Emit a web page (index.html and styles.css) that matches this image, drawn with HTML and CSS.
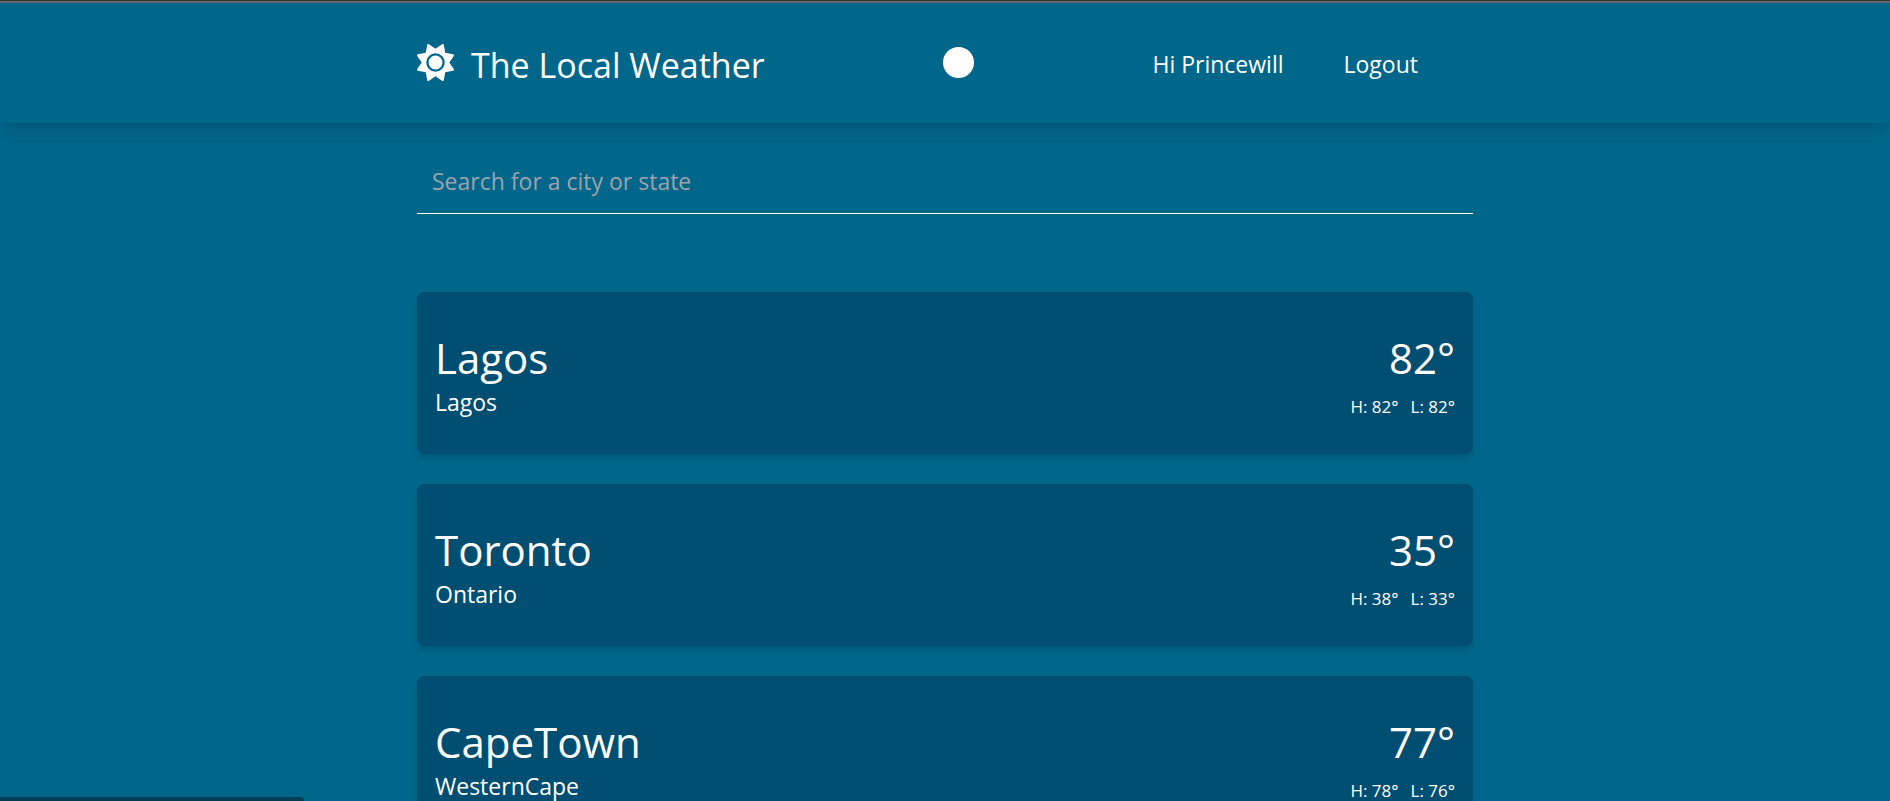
FILE: index.html
```html
<!DOCTYPE html>
<html lang="en">
<head>
<meta charset="utf-8">
<meta name="viewport" content="width=device-width, initial-scale=1">
<title>The Local Weather</title>
<link rel="stylesheet" href="styles.css">
</head>
<body>
<header class="site-header">
  <nav class="nav container">
    <a class="brand" href="#">
      <svg class="brand-icon" viewBox="0 0 512 512" aria-hidden="true"><path fill="currentColor" d="M361.500 1.200c5 2.100 8.600 6.600 9.600 11.900L391 121l107.900 19.800c5.300 1 9.800 4.600 11.900 9.600s1.500 10.700-1.600 15.200L446.900 256l62.300 90.300c3.100 4.500 3.700 10.200 1.600 15.200s-6.600 8.600-11.900 9.600L391 391 371.100 498.900c-1 5.300-4.600 9.800-9.600 11.900s-10.700 1.500-15.200-1.600L256 446.900l-90.300 62.300c-4.500 3.100-10.200 3.700-15.200 1.600s-8.600-6.600-9.600-11.900L121 391 13.100 371.100c-5.300-1-9.800-4.600-11.900-9.600s-1.500-10.700 1.600-15.200L65.100 256 2.800 165.700c-3.100-4.500-3.700-10.200-1.600-15.200s6.600-8.600 11.900-9.600L121 121 140.900 13.100c1-5.300 4.600-9.800 9.600-11.900s10.700-1.500 15.200 1.600L256 65.100 346.300 2.800c4.500-3.100 10.200-3.700 15.200-1.600zM160 256a96 96 0 1 1 192 0 96 96 0 1 1 -192 0zm224 0a128 128 0 1 0 -256 0 128 128 0 1 0 256 0z"/></svg>
      <span class="brand-name">The Local Weather</span>
    </a>
    <button class="dot" type="button" aria-label="About"></button>
    <div class="account">
      <span>Hi Princewill</span>
      <button class="logout" type="button">Logout</button>
    </div>
  </nav>
</header>
<main class="container">
  <input class="search" type="text" placeholder="Search for a city or state" aria-label="Search for a city or state">
  <div class="cities">
    <article class="card">
      <div class="place"><h2 class="city">Lagos</h2><p class="region">Lagos</p></div>
      <div class="temps"><p class="now">82°</p><p class="range"><span>H: 82°</span><span>L: 82°</span></p></div>
    </article>
    <article class="card">
      <div class="place"><h2 class="city">Toronto</h2><p class="region">Ontario</p></div>
      <div class="temps"><p class="now">35°</p><p class="range"><span>H: 38°</span><span>L: 33°</span></p></div>
    </article>
    <article class="card">
      <div class="place"><h2 class="city">CapeTown</h2><p class="region">WesternCape</p></div>
      <div class="temps"><p class="now">77°</p><p class="range"><span>H: 78°</span><span>L: 76°</span></p></div>
    </article>
  </div>
</main>
<div class="status"></div>
</body>
</html>
```
FILE: styles.css
```css
* { box-sizing: border-box; margin: 0; padding: 0; }

html { scrollbar-width: none; }

body {
  min-height: 100vh;
  background: #00668a;
  color: #fff;
  font-family: "Segoe UI", "Open Sans", "Noto Sans", sans-serif;
  font-size: 23px;
}

button, input { font: inherit; color: inherit; background: none; border: 0; }

.container { width: 100%; max-width: 1056px; margin: 0 auto; }

.site-header {
  border-top: 1px solid #333;
  box-shadow: inset 0 2px #666, 0 12px 19px -4px rgb(0 0 0 / 0.1), 0 5px 8px -5px rgb(0 0 0 / 0.1);
}

.nav {
  display: flex;
  align-items: center;
  justify-content: space-between;
  padding: 30px 55px 30px 0;
  min-height: 122px;
}

.brand { display: flex; align-items: center; gap: 17px; color: inherit; text-decoration: none; }
.brand-icon { width: 37px; height: 37px; }
.brand-name { padding-top: 6px; font-size: 34px; line-height: 48px; }

.dot { width: 31px; height: 31px; border-radius: 50%; background: #fff; cursor: pointer; }

.account { display: flex; align-items: center; gap: 60px; padding-top: 4px; }
.logout { cursor: pointer; }

main { padding: 32px 0 40px; }

.search {
  display: block;
  width: 100%;
  height: 59px;
  padding: 0 15px 6px;
  border-bottom: 1px solid #fff;
  outline: none;
}
.search::placeholder { color: #9ca3af; opacity: 1; }

.cities { display: flex; flex-direction: column; gap: 30px; margin-top: 78px; }

.card {
  display: flex;
  justify-content: space-between;
  padding: 37px 18px 27px;
  border-radius: 8px;
  background: #004e71;
  box-shadow: 0 5px 8px -1px rgb(0 0 0 / 0.1), 0 3px 5px -3px rgb(0 0 0 / 0.1);
}

.city, .now { font-size: 42px; font-weight: 400; line-height: 58px; }
.region { line-height: 31px; }
.temps { display: flex; flex-direction: column; align-items: flex-end; }
.range { display: flex; gap: 12px; font-size: 17px; line-height: 40px; }

.status {
  position: fixed;
  left: 0;
  bottom: 0;
  width: 304px;
  height: 4px;
  border-top-right-radius: 4px;
  background: #003f57;
}
```
